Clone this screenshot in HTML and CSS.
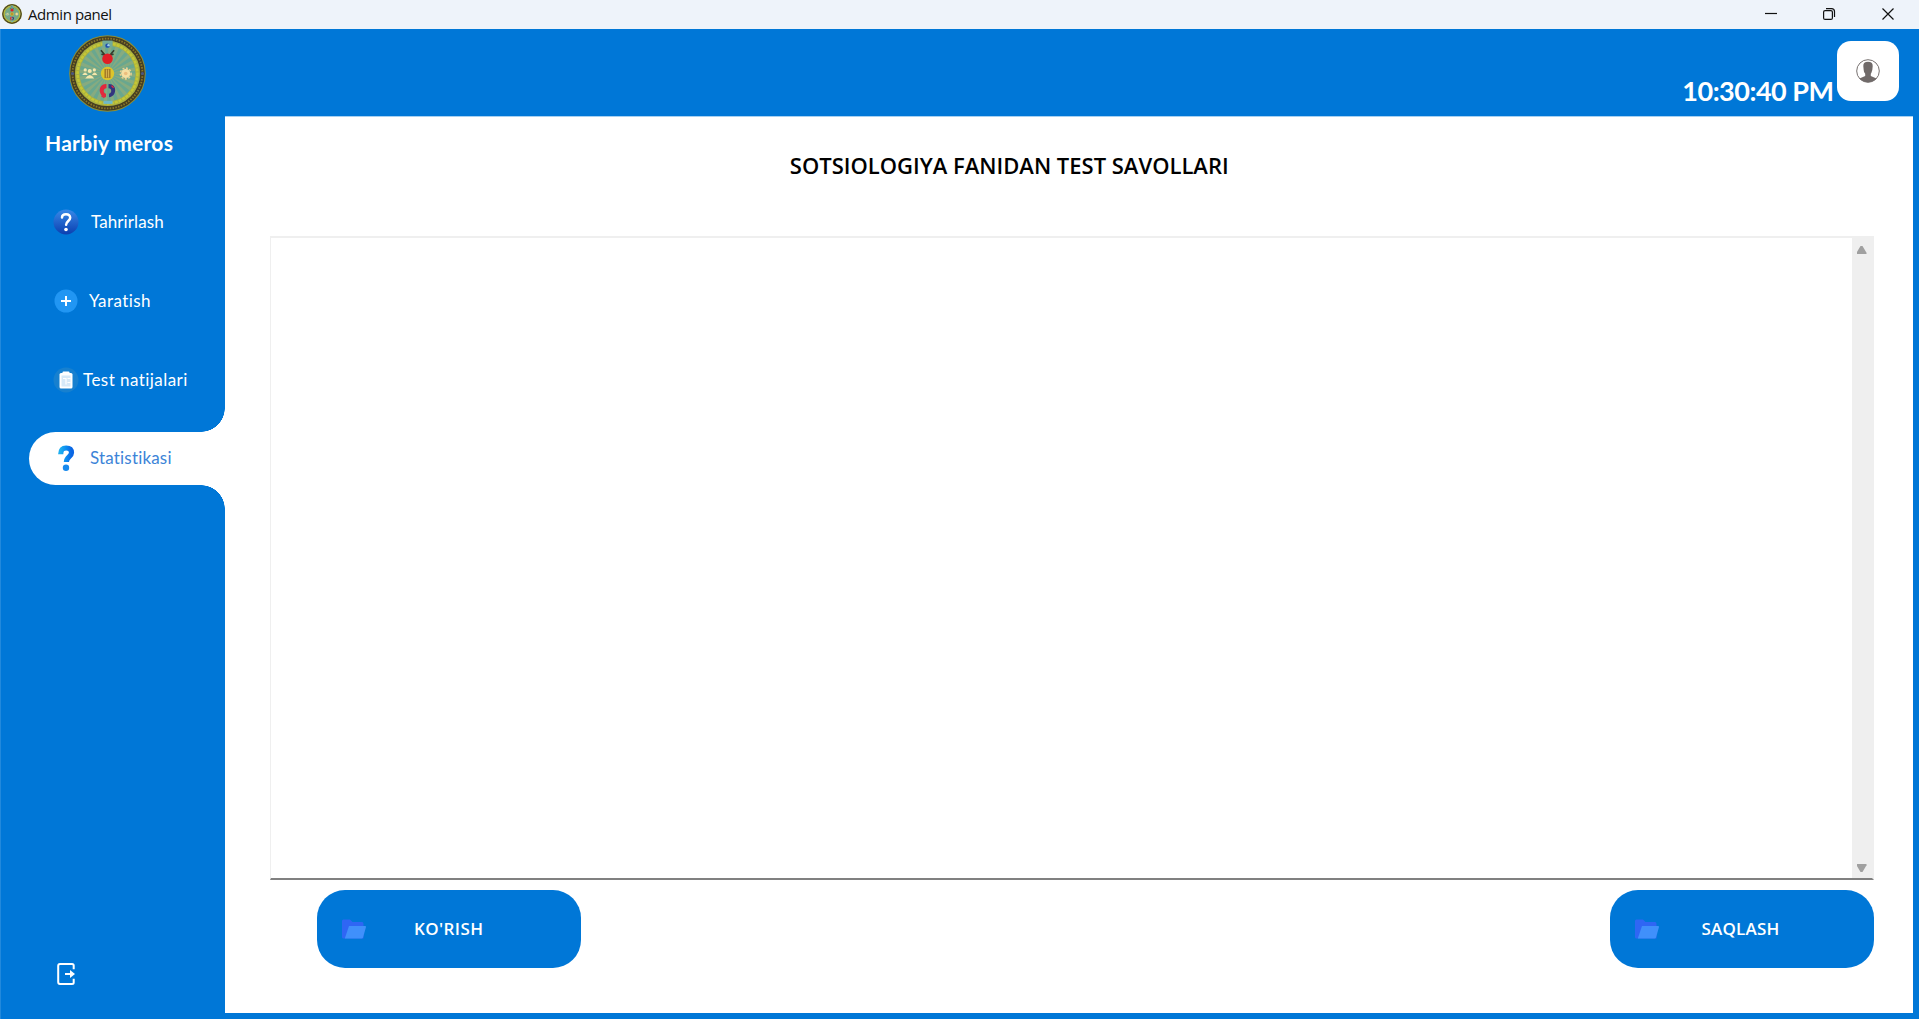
FILE: index.html
```html
<!DOCTYPE html>
<html lang="uz">
<head>
<meta charset="utf-8">
<title>Admin panel</title>
<link rel="stylesheet" href="styles.css">
</head>
<body>
<svg width="0" height="0" class="defs" aria-hidden="true">
  <defs>
    <linearGradient id="help" x1="0" y1="0" x2="0" y2="1"><stop offset="0" stop-color="#3789e8"/><stop offset="1" stop-color="#0b3fb0"/></linearGradient>
    <linearGradient id="mark" x1="0" y1="0" x2="1" y2="0"><stop offset="0" stop-color="#1daef0"/><stop offset=".5" stop-color="#0c8cf0"/><stop offset="1" stop-color="#0a66e4"/></linearGradient>
    <symbol id="emblem" viewBox="0 0 76 76">
      <circle cx="38" cy="38" r="37.8" fill="#8d8f35"/>
      <circle cx="38" cy="38" r="34.5" fill="none" stroke="#453d22" stroke-width="4.6"/>
      <circle cx="38" cy="38" r="34.5" fill="none" stroke="#8a7828" stroke-width="1.8" stroke-dasharray="1.5 1.3"/>
      <circle cx="38" cy="38" r="32" fill="#aab043"/>
      <circle cx="38" cy="38" r="27.5" fill="#69a78f"/>
      <circle cx="38" cy="38" r="14" fill="none" stroke="#86ab80" stroke-width="27" stroke-dasharray="1.8 1.865"/>
      <circle cx="38" cy="38" r="29.5" fill="none" stroke="#c5c734" stroke-width="2.5" stroke-dasharray="3 1"/>
      <rect x="33" y="5.5" width="10" height="7" fill="#72aa98"/><circle cx="38" cy="10.5" r="2.2" fill="#1e4eae"/><circle cx="39" cy="10" r="1.2" fill="#9fd0e8"/>
      <path d="M31.5 15l5 6M44.5 15l-5 6M32 19l5 1M44 19l-5 1" stroke="#353d2c" stroke-width="1.6"/>
      <circle cx="38" cy="23.5" r="5.2" fill="#e01f25"/>
      <circle cx="38" cy="38" r="6.6" fill="#dcc52b"/><rect x="35" y="33.5" width="6" height="9" fill="#a57b27"/><path d="M37 34v8M39 34v8" stroke="#e8c85a" stroke-width=".7"/>
      <g fill="#f4e7ac"><circle cx="20.5" cy="35.5" r="2"/><circle cx="16" cy="34.5" r="1.6"/><circle cx="25" cy="34.5" r="1.6"/><path d="M13 39.500q3-5 5.500 0zM22.500 39.500q3-5 5.500 0zM16 43q4.500-7 9 0z"/></g>
      <circle cx="56" cy="38" r="4.5" fill="#f5dfa3"/><circle cx="56" cy="38" r="5.3" fill="none" stroke="#e9d092" stroke-width="1.5" stroke-dasharray="2 1.5"/><circle cx="56" cy="38" r="1.8" fill="#edbd7d"/>
      <path d="M37 48.500C28 48 28.500 61 36.500 61.500V58C33 57 34 52 37 52.500z" fill="#e1283d"/><path d="M39 48.500C48 48 47.500 61 39.500 61.500V58C43 57 42 52 39 52.500z" fill="#33357f"/><path d="M32 60l3 2M42 50l2 2" stroke="#e1283d" stroke-width="1.300"/>
      <rect x="34" y="65" width="9" height="3" fill="#6fb9c8"/>
      <circle cx="3.5" cy="38" r="1.5" fill="#495581"/><circle cx="72.5" cy="38" r="1.5" fill="#495581"/>
    </symbol>
    <symbol id="folder" viewBox="0 0 24 20"><path d="M0 2Q0 .5 1.500.5H8L10.500 3H20Q21.500 3 21.500 5V19.500H1.500Q0 19.500 0 18z" fill="#2f66f4"/><path d="M7 7H23Q24.200 7 24 8L21 18.500Q20.700 19.500 19.500 19.500H2.800z" fill="#4090fb"/></symbol>
  </defs>
</svg>
<div class="window">
  <header class="titlebar">
    <svg class="app-icon"><use href="#emblem"/></svg>
    <span class="app-title">Admin panel</span>
    <svg class="controls" viewBox="0 0 130 14" fill="none" stroke="#111" stroke-width="1.200"><path d="M0 6.500H12"/><rect x="58.600" y="3.600" width="8.800" height="8.800" rx="1.500"/><path d="M61 1.600h5.500q3 0 3 3V10"/><path d="M117.500 1.500l11 11m0-11l-11 11"/></svg>
  </header>
  <div class="app">
    <aside class="sidebar">
      <svg class="logo"><use href="#emblem"/></svg>
      <h1 class="brand">Harbiy meros</h1>
      <nav class="nav">
        <a class="item edit"><svg class="icon" viewBox="0 0 26 26"><circle cx="13" cy="13" r="12.500" fill="url(#help)"/><path d="M9 8.500Q9 5.200 13 5.200T17.200 8.700C17.200 11.800 13.100 12.200 13.100 15.800" fill="none" stroke="#fff" stroke-width="2.500" stroke-linecap="round"/><circle cx="13" cy="20.500" r="1.800" fill="#fff"/></svg><span>Tahrirlash</span></a>
        <a class="item create"><svg class="icon" viewBox="0 0 26 26"><circle cx="13" cy="13" r="11.500" fill="#2196f3"/><path d="M13 8v10M8 13h10" stroke="#fff" stroke-width="2"/></svg><span>Yaratish</span></a>
        <a class="item results"><svg class="icon" viewBox="0 0 26 26"><circle cx="13" cy="13" r="12.500" fill="#1780cf"/><rect x="6.500" y="6" width="13" height="15.500" rx="1.500" fill="#fff"/><rect x="9.500" y="4.500" width="7" height="3" rx="1" fill="#fff"/><rect x="8.500" y="8.500" width="9" height="11" fill="#d6e9f8"/><path d="M10 11.500h3v6M14.500 11.500h3M14.500 15.500h3" fill="none" stroke="#fff" stroke-width="1.200"/></svg><span>Test natijalari</span></a>
        <a class="item stats active"><svg class="icon" viewBox="0 0 26 26"><path d="M7.700 9.300C7.800 4 10 3 13.100 3C17 3 18.500 5 18.500 7.800C18.500 11.700 13.400 11.700 13.400 17" fill="none" stroke="url(#mark)" stroke-width="5.200"/><circle cx="13" cy="22.800" r="3.200" fill="#1689ed"/></svg><span>Statistikasi</span></a>
      </nav>
      <svg class="exit" viewBox="0 0 20 22" fill="none" stroke="#fff"><path d="M16.700 6.200V2.500Q16.700 1 15 1H3Q1.200 1 1.200 3V19Q1.200 21 3 21H15Q16.700 21 16.700 19.500V15.700" stroke-width="2"/><path d="M8 11H15" stroke-width="2"/><path d="M13 7l5 4-5 4z" fill="#fff" stroke="none"/></svg>
    </aside>
    <div class="content">
      <div class="topbar">
        <time class="clock">10:30:40 PM</time>
        <button class="avatar" aria-label="Profil"><svg viewBox="0 0 24 24"><circle cx="12" cy="12" r="11.300" fill="#fff" stroke="#777170" stroke-width="1"/><path d="M7.300 7Q7.200 2.800 12 2.800T16.700 7L16.300 11Q15.300 14.500 14.800 14.800V17L20.500 19.500Q17 23.300 12 23.300T3.500 19.500L9.200 17V14.800Q7.700 13.500 7.700 11z" fill="#706a69"/></svg></button>
      </div>
      <main class="panel">
        <h2 class="heading">SOTSIOLOGIYA FANIDAN TEST SAVOLLARI</h2>
        <div class="editor"><div class="scroll"><i class="up"></i><i class="down"></i></div></div>
        <div class="actions">
          <button class="btn view"><svg class="folder"><use href="#folder"/></svg><span>KO'RISH</span></button>
          <button class="btn save"><svg class="folder"><use href="#folder"/></svg><span>SAQLASH</span></button>
        </div>
      </main>
    </div>
  </div>
</div>
</body>
</html>
```
FILE: styles.css
```css
* { box-sizing: border-box; }
body { margin: 0; font-family: "Open Sans", "Noto Sans", sans-serif; }
.defs { position: absolute; }
.window { width: 100vw; height: 100vh; display: grid; grid-template-rows: 29px 1fr; overflow: hidden; }

.titlebar { display: flex; align-items: center; background: #eef3fa; padding: 0 24px 1px 2px; }
.app-icon { width: 20px; height: 20px; margin-right: 6px; }
.app-title { font-size: 15px; line-height: 27px; letter-spacing: -0.42px; color: #111; }
.controls { width: 130px; height: 14px; margin-left: auto; }

.app { display: grid; grid-template-columns: 225px 1fr; background: #0077d7; min-height: 0; }

.sidebar { display: flex; flex-direction: column; position: relative; color: #fff; font-family: Lato, "Open Sans", sans-serif; box-shadow: inset 1px 0 #2289dc; }
.logo { width: 77px; height: 77px; margin: 6px 0 0 68.5px; flex: none; }
.brand { margin: 16px 0 0 45px; font-size: 21px; line-height: 30px; font-weight: 700; letter-spacing: 0.27px; white-space: nowrap; }
.nav { display: flex; flex-direction: column; gap: 26.2px; margin-top: 38px; padding-left: 29px; }
.item { display: flex; align-items: center; height: 52.5px; padding-left: 24px; font-size: 17px; line-height: 24px; white-space: nowrap; }
.icon { width: 26px; height: 26px; flex: none; margin-right: 12px; }
.edit { letter-spacing: 0.1px; }
.create { letter-spacing: 0.4px; }
.results { letter-spacing: 0.45px; }
.stats { letter-spacing: 0.18px; }
.results .icon { margin-right: 4px; }
.create .icon { margin-right: 10px; }
.stats .icon { margin-right: 11px; }
.item.active { position: relative; background: #fff; color: #3c84d8; border-radius: 27px 0 0 27px; }
.item.active::before, .item.active::after { content: ""; position: absolute; right: 0; width: 24px; height: 24px; }
.item.active::before { bottom: 100%; background: radial-gradient(circle at 0 0, #0077d7 23.5px, #fff 24px); }
.item.active::after { top: 100%; background: radial-gradient(circle at 0 100%, #0077d7 23.5px, #fff 24px); }
.exit { width: 20px; height: 22px; margin: auto 0 34px 56.5px; }

.content { display: grid; grid-template-rows: 87px 1fr; padding: 0 6.5px 6px 0; min-width: 0; }
.topbar { display: flex; justify-content: flex-end; padding: 12px 14px 0 0; }
.clock { margin: 32px 3px 0 0; color: #fff; font: 700 27px/36px Lato, sans-serif; letter-spacing: -0.5px; }
.avatar { width: 62px; height: 60px; border: 0; border-radius: 14px; background: #fff; padding: 0; display: grid; place-items: center; }
.avatar svg { width: 24px; height: 24px; }

.panel { display: flex; flex-direction: column; background: #fff; border-top: 1px solid #a6d0f2; padding: 33px 39px 0 45px; }
.heading { margin: 0; padding-right: 125px; text-align: center; font-size: 22px; line-height: 30px; font-weight: 600; color: #000; white-space: nowrap; }
.editor { margin-top: 56px; height: 644px; border: 2px solid #efefef; border-left-width: 1px; border-bottom: 2px solid #808080; display: flex; justify-content: flex-end; }
.scroll { width: 20px; background: #efefef; display: flex; flex-direction: column; justify-content: space-between; align-items: center; padding: 8px 0 6px; }
.up, .down { width: 10px; height: 8px; background: #a0a0a0; }
.up { clip-path: polygon(40% 0, 60% 0, 100% 85%, 100% 100%, 0 100%, 0 85%); }
.down { clip-path: polygon(0 0, 100% 0, 100% 15%, 60% 100%, 40% 100%, 0 15%); }
.actions { display: flex; justify-content: space-between; margin: 10px 0 0 47px; }
.btn { width: 264px; height: 78px; display: flex; align-items: center; border: 0; border-radius: 28px; background: #0077d7; color: #fff; padding: 0 0 0 25px; font: 600 17px/24px "Open Sans", sans-serif; letter-spacing: 0.4px; }
.folder { width: 24px; height: 20px; margin-right: 48px; }
.save { letter-spacing: 0.2px; }
.save .folder { margin-right: 43px; }
```
